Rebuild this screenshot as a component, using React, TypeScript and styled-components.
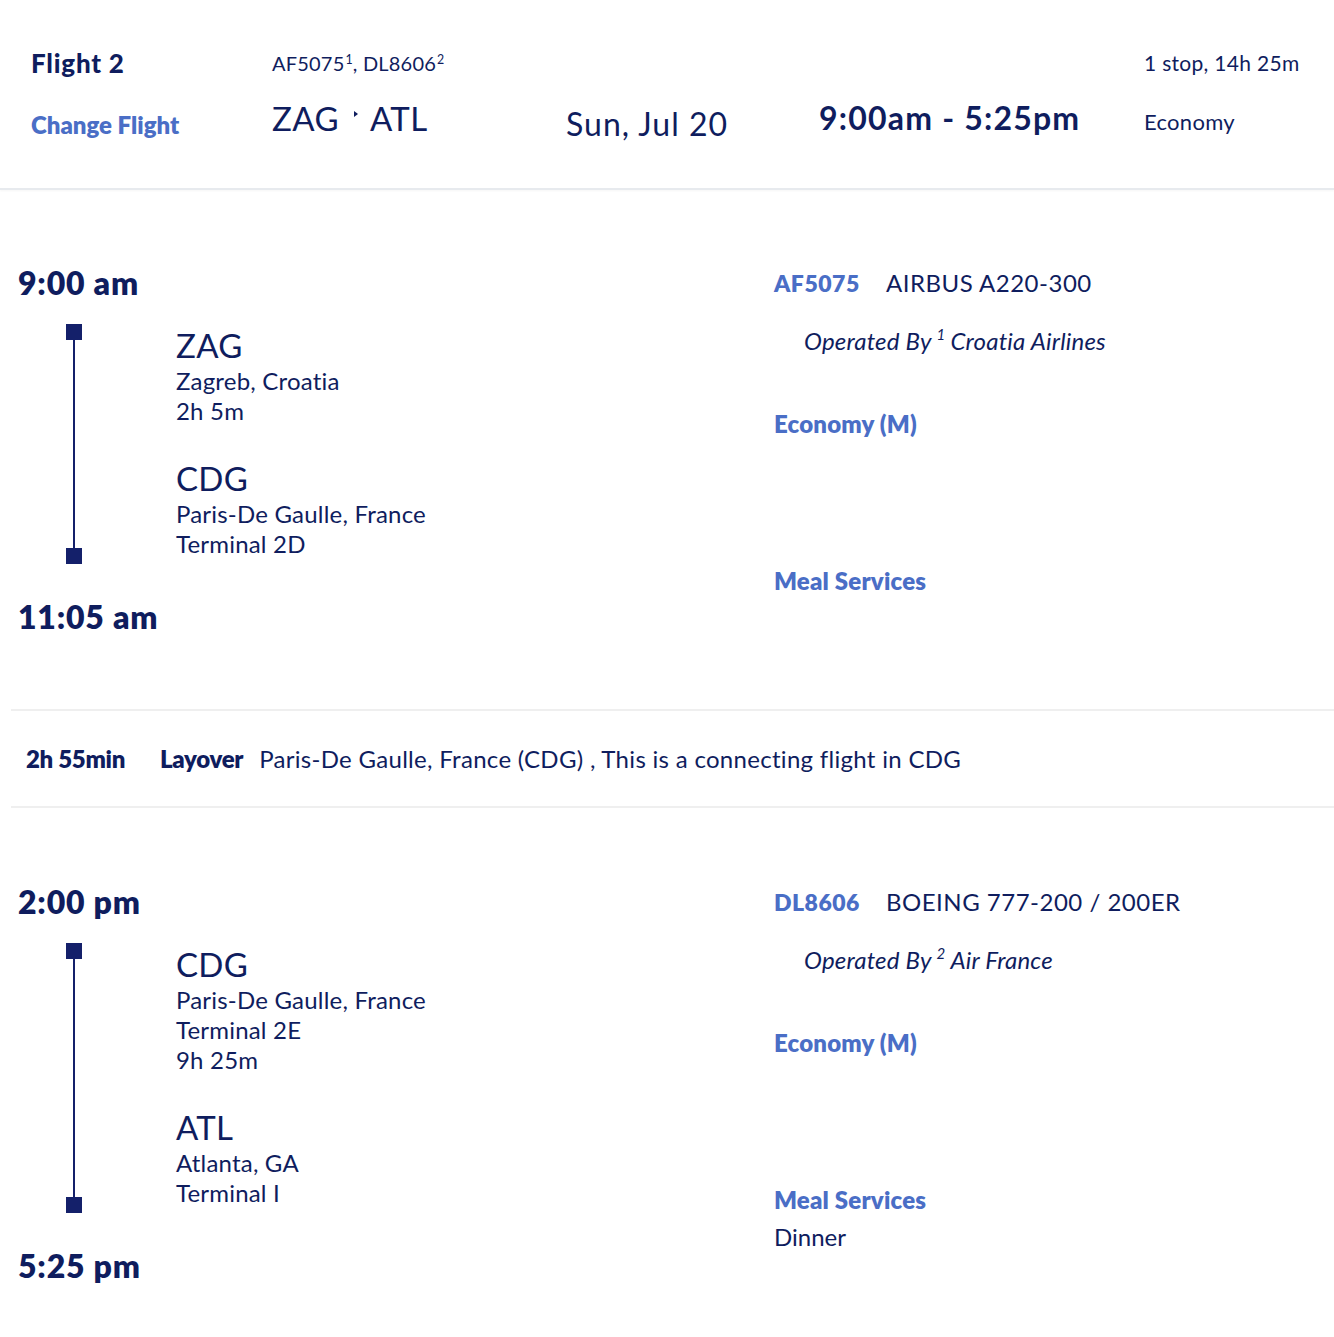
import * as React from 'react';
import styled, { createGlobalStyle } from 'styled-components';

const NAVY = '#0f1d5e';
const BLUE = '#4a6ec6';

const GlobalStyle = createGlobalStyle`
  body {
    margin: 0;
    background: #ffffff;
    color: ${NAVY};
    font-family: Lato, "Open Sans", "Liberation Sans", sans-serif;
  }
`;

const Page = styled.div`
  width: 1334px;
`;

/* ---------- header ---------- */

const Header = styled.header`
  display: grid;
  grid-template-columns: 241px 294px 253px 325px 1fr;
  grid-template-rows: 30px auto;
  height: 190px;
  box-sizing: border-box;
  padding: 48px 36px 0 31px;
  border-bottom: 2px solid #e7eaee;
  box-shadow: 0 1px 2px rgba(0, 0, 0, 0.04);
`;

const HeaderTop = styled.div<{ $size: number; $weight?: number; $spacing?: number }>`
  font-size: ${(p) => p.$size}px;
  font-weight: ${(p) => p.$weight ?? 400};
  letter-spacing: ${(p) => p.$spacing ?? 0}px;
  line-height: 30px;
  white-space: nowrap;
`;

const HeaderMain = styled.div<{
  $size: number;
  $weight?: number;
  $offset: number;
  $spacing?: number;
  $color?: string;
}>`
  grid-row: 2;
  align-self: start;
  margin-top: ${(p) => p.$offset}px;
  font-size: ${(p) => p.$size}px;
  font-weight: ${(p) => p.$weight ?? 400};
  letter-spacing: ${(p) => p.$spacing ?? 0}px;
  line-height: 1.2;
  color: ${(p) => p.$color ?? NAVY};
  white-space: nowrap;
`;

const Sup = styled.sup`
  font-size: 0.62em;
  line-height: 0;
  vertical-align: 0.55em;
  margin-left: 1px;
`;

const RouteArrow = styled.span`
  display: inline-block;
  width: 0;
  height: 0;
  margin: 0 12px 0 15px;
  vertical-align: 0.42em;
  border-top: 3px solid transparent;
  border-bottom: 3px solid transparent;
  border-left: 4px solid ${NAVY};
`;

const Spacer = styled.div``;

/* ---------- segments ---------- */

const Body = styled.div`
  padding-left: 11px;
`;

const Segment = styled.section<{ $top: number; $bottom: number }>`
  display: grid;
  grid-template-columns: 756px 1fr;
  padding: ${(p) => p.$top}px 0 ${(p) => p.$bottom}px 7px;
`;

const Timeline = styled.div`
  display: flex;
  flex-direction: column;
`;

const Clock = styled.div<{ $gap?: number }>`
  margin-top: ${(p) => p.$gap ?? 0}px;
  font-size: 32px;
  font-weight: 800;
  letter-spacing: 0.8px;
  line-height: 40px;
`;

const Leg = styled.div`
  display: flex;
  gap: 94px;
  margin-top: 21px;
  padding-left: 48px;
`;

const Rail = styled.div`
  display: flex;
  flex-direction: column;
  align-items: center;
  width: 16px;
`;

const RailEnd = styled.div`
  width: 16px;
  height: 16px;
  background: #14206a;
`;

const RailLine = styled.div`
  flex: 1;
  width: 2px;
  background: #14206a;
`;

const Stops = styled.div`
  display: flex;
  flex-direction: column;
  gap: 31px;
  padding-bottom: 5px;
`;

const Stop = styled.div`
  display: flex;
  flex-direction: column;
`;

const StopCode = styled.div`
  font-size: 33px;
  line-height: 42px;
  letter-spacing: 0.3px;
`;

const StopLine = styled.div`
  font-size: 24px;
  line-height: 30px;
  letter-spacing: 0.2px;
`;

const Details = styled.div`
  display: flex;
  flex-direction: column;
`;

const FlightRow = styled.div`
  display: flex;
  align-items: baseline;
  line-height: 40px;
`;

const FlightCode = styled.span`
  min-width: 112px;
  font-size: 23px;
  font-weight: 800;
  letter-spacing: 0.5px;
  color: ${BLUE};
`;

const Aircraft = styled.span`
  font-size: 24px;
  letter-spacing: 0.5px;
`;

const Operator = styled.div`
  margin-top: 23px;
  padding-left: 30px;
  font-size: 24px;
  font-style: italic;
  line-height: 30px;
  letter-spacing: 0.2px;
`;

const OperatorSup = styled.sup`
  font-size: 15px;
  line-height: 0;
  vertical-align: 0.7em;
  margin: 0 5px 0 5px;
`;

const Label = styled.div<{ $gap: number }>`
  margin-top: ${(p) => p.$gap}px;
  font-size: 24px;
  font-weight: 800;
  letter-spacing: 0.2px;
  line-height: 30px;
  color: ${BLUE};
`;

const Value = styled.div`
  margin-top: 7px;
  font-size: 24px;
  line-height: 30px;
`;

/* ---------- layover ---------- */

const Layover = styled.div`
  display: flex;
  align-items: center;
  height: 95px;
  padding-left: 15px;
  border-top: 2px solid #efefef;
  border-bottom: 2px solid #efefef;
  font-size: 24px;
  white-space: nowrap;
`;

const LayoverTime = styled.span`
  width: 134px;
  font-weight: 800;
  letter-spacing: -0.3px;
`;

const LayoverLabel = styled.span`
  margin-right: 16px;
  font-weight: 800;
  letter-spacing: -0.3px;
`;

const LayoverText = styled.span`
  letter-spacing: 0.3px;
`;

interface StopInfo {
  code: string;
  lines: string[];
}

interface SegmentInfo {
  depart: string;
  arrive: string;
  from: StopInfo;
  to: StopInfo;
  flight: string;
  aircraft: string;
  ref: number;
  operator: string;
  meal?: string;
}

const segments: SegmentInfo[] = [
  {
    depart: '9:00 am',
    arrive: '11:05 am',
    from: { code: 'ZAG', lines: ['Zagreb, Croatia', '2h 5m'] },
    to: { code: 'CDG', lines: ['Paris-De Gaulle, France', 'Terminal 2D'] },
    flight: 'AF5075',
    aircraft: 'AIRBUS A220-300',
    ref: 1,
    operator: 'Croatia Airlines',
  },
  {
    depart: '2:00 pm',
    arrive: '5:25 pm',
    from: { code: 'CDG', lines: ['Paris-De Gaulle, France', 'Terminal 2E', '9h 25m'] },
    to: { code: 'ATL', lines: ['Atlanta, GA', 'Terminal I'] },
    flight: 'DL8606',
    aircraft: 'BOEING 777-200 / 200ER',
    ref: 2,
    operator: 'Air France',
    meal: 'Dinner',
  },
];

const StopBlock = ({ stop }: { stop: StopInfo }) => (
  <Stop>
    <StopCode>{stop.code}</StopCode>
    {stop.lines.map((line) => (
      <StopLine key={line}>{line}</StopLine>
    ))}
  </Stop>
);

const SegmentView = ({ seg, top, bottom }: { seg: SegmentInfo; top: number; bottom: number }) => (
  <Segment $top={top} $bottom={bottom}>
    <Timeline>
      <Clock>{seg.depart}</Clock>
      <Leg>
        <Rail>
          <RailEnd />
          <RailLine />
          <RailEnd />
        </Rail>
        <Stops>
          <StopBlock stop={seg.from} />
          <StopBlock stop={seg.to} />
        </Stops>
      </Leg>
      <Clock $gap={33}>{seg.arrive}</Clock>
    </Timeline>
    <Details>
      <FlightRow>
        <FlightCode>{seg.flight}</FlightCode>
        <Aircraft>{seg.aircraft}</Aircraft>
      </FlightRow>
      <Operator>
        Operated By<OperatorSup>{seg.ref}</OperatorSup>{seg.operator}
      </Operator>
      <Label $gap={53}>Economy (M)</Label>
      <Label $gap={127}>Meal Services</Label>
      {seg.meal && <Value>{seg.meal}</Value>}
    </Details>
  </Segment>
);

export default function App() {
  return (
    <Page>
      <GlobalStyle />
      <Header>
        <HeaderTop $size={26} $weight={900} $spacing={0.8}>Flight 2</HeaderTop>
        <HeaderTop $size={20} $spacing={0.2}>
          AF5075<Sup>1</Sup>, DL8606<Sup>2</Sup>
        </HeaderTop>
        <Spacer />
        <Spacer />
        <HeaderTop $size={21} $spacing={0.3}>1 stop, 14h 25m</HeaderTop>

        <HeaderMain $size={24} $weight={800} $offset={33} $color={BLUE}>
          Change Flight
        </HeaderMain>
        <HeaderMain $size={33} $offset={21} $spacing={0.4}>
          ZAG<RouteArrow />ATL
        </HeaderMain>
        <HeaderMain $size={32} $offset={27} $spacing={1}>Sun, Jul 20</HeaderMain>
        <HeaderMain $size={32} $weight={700} $offset={21} $spacing={1.2}>
          9:00am - 5:25pm
        </HeaderMain>
        <HeaderMain $size={22} $offset={31} $spacing={0.3}>Economy</HeaderMain>
      </Header>
      <Body>
        <SegmentView seg={segments[0]} top={73} bottom={72} />
        <Layover>
          <LayoverTime>2h 55min</LayoverTime>
          <LayoverLabel>Layover</LayoverLabel>
          <LayoverText>Paris-De Gaulle, France (CDG) , This is a connecting flight in CDG</LayoverText>
        </Layover>
        <SegmentView seg={segments[1]} top={74} bottom={50} />
      </Body>
    </Page>
  );
}
